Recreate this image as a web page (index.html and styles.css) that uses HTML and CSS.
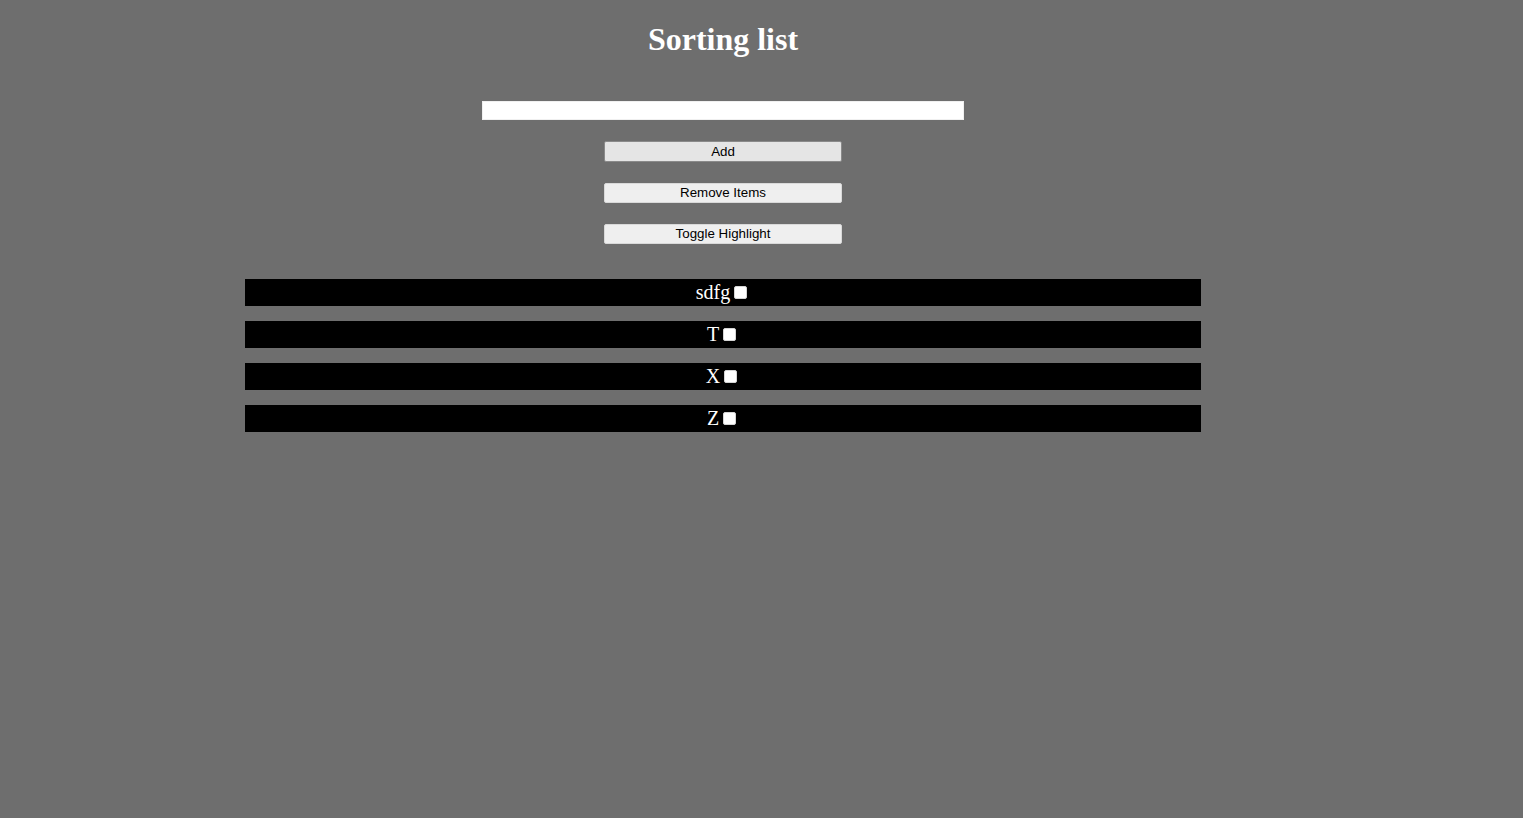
FILE: index.html
```html
<!DOCTYPE html>
<html>
<head>
<meta charset="utf-8">
<title>Sorting list</title>
<link rel="stylesheet" href="styles.css">
</head>
<body>
<div class="page">
  <h1 class="title">Sorting list</h1>
  <div class="controls">
    <input class="entry" type="text">
    <button class="btn btn-hover">Add</button>
    <button class="btn">Remove Items</button>
    <button class="btn">Toggle Highlight</button>
  </div>
  <ul class="list">
    <li class="item"><span class="label">sdfg</span><span class="check"></span></li>
    <li class="item"><span class="label">T</span><span class="check"></span></li>
    <li class="item"><span class="label">X</span><span class="check"></span></li>
    <li class="item"><span class="label">Z</span><span class="check"></span></li>
  </ul>
</div>
</body>
</html>
```
FILE: styles.css
```css
html, body {
  margin: 0;
  padding: 0;
  background: #6e6e6e;
}
body {
  padding: 0 8px;
  font-family: "Liberation Serif", "Times New Roman", serif;
}
.page {
  width: 1430px;
  display: flex;
  flex-direction: column;
  align-items: center;
}
.title {
  margin: 21px 0 0;
  font-size: 32px;
  line-height: 37px;
  font-weight: bold;
  color: #ffffff;
}
.controls {
  margin-top: 43px;
  display: flex;
  flex-direction: column;
  align-items: center;
}
.entry {
  box-sizing: border-box;
  width: 482px;
  height: 19px;
  margin: 0 0 21px;
  padding: 0 2px;
  border: 1px solid #f0f0f0;
  background: #ffffff;
  outline: none;
}
.btn {
  box-sizing: border-box;
  width: 238px;
  height: 20px;
  margin: 0 0 21px;
  padding: 0 6px;
  border: 1px solid #d9d9d9;
  border-radius: 2px;
  background: #efefef;
  color: #000000;
  font-family: "Liberation Sans", Arial, sans-serif;
  font-size: 13.33px;
  line-height: 16px;
}
.btn-hover {
  height: 21px;
  background: #e5e5e5;
  border-color: #8a8a8a;
}
.list {
  list-style: none;
  margin: 14px 0 0;
  padding: 0;
  display: flex;
  flex-direction: column;
  gap: 15px;
}
.item {
  width: 956px;
  height: 27px;
  background: #000000;
  color: #ffffff;
  display: flex;
  align-items: center;
  justify-content: center;
  font-size: 20px;
}
.label {
  line-height: 23px;
}
.check {
  box-sizing: border-box;
  width: 13px;
  height: 13px;
  margin: 0 3px 0 4px;
  background: #ffffff;
  border: 1px solid #d4d4d4;
  border-radius: 2px;
}
```
